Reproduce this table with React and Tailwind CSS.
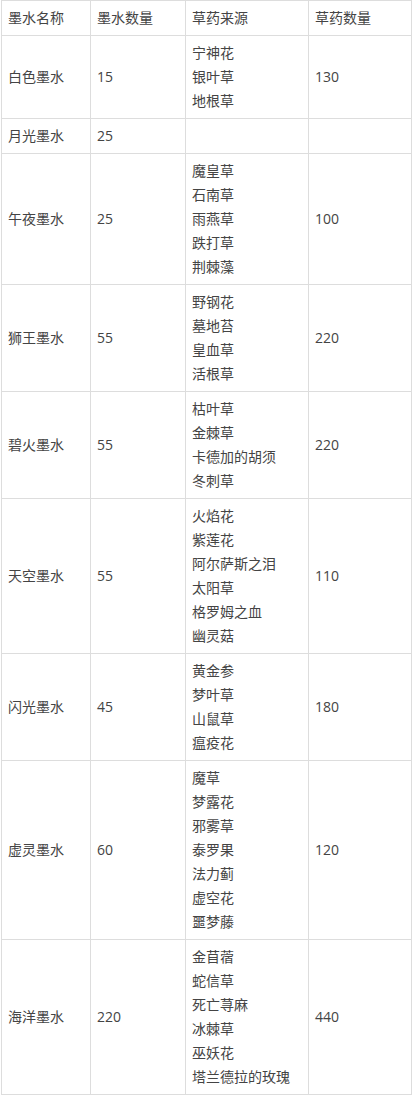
import React from "react";

const rows = [
  { name: "白色墨水", ink: "15", herbs: ["宁神花", "银叶草", "地根草"], qty: "130" },
  { name: "月光墨水", ink: "25", herbs: [], qty: "" },
  { name: "午夜墨水", ink: "25", herbs: ["魔皇草", "石南草", "雨燕草", "跌打草", "荆棘藻"], qty: "100" },
  { name: "狮王墨水", ink: "55", herbs: ["野钢花", "墓地苔", "皇血草", "活根草"], qty: "220" },
  { name: "碧火墨水", ink: "55", herbs: ["枯叶草", "金棘草", "卡德加的胡须", "冬刺草"], qty: "220" },
  { name: "天空墨水", ink: "55", herbs: ["火焰花", "紫莲花", "阿尔萨斯之泪", "太阳草", "格罗姆之血", "幽灵菇"], qty: "110" },
  { name: "闪光墨水", ink: "45", herbs: ["黄金参", "梦叶草", "山鼠草", "瘟疫花"], qty: "180" },
  { name: "虚灵墨水", ink: "60", herbs: ["魔草", "梦露花", "邪雾草", "泰罗果", "法力蓟", "虚空花", "噩梦藤"], qty: "120" },
  { name: "海洋墨水", ink: "220", herbs: ["金苜蓿", "蛇信草", "死亡荨麻", "冰棘草", "巫妖花", "塔兰德拉的玫瑰"], qty: "440" },
];

const cell = "border border-[#dddddd] px-[6px] py-[5px] align-middle text-left font-normal";

function App() {
  return (
    <div className="w-[413px] bg-white pl-px text-[14px] leading-[24px] text-[#444444] [font-family:'Open_Sans','Noto_Sans_CJK_SC',sans-serif]">
      <table className="w-[410px] table-fixed border-collapse">
        <colgroup>
          <col className="w-[89px]" />
          <col className="w-[95px]" />
          <col className="w-[123px]" />
          <col className="w-[103px]" />
        </colgroup>
        <thead>
          <tr>
            <th className={cell}>墨水名称</th>
            <th className={cell}>墨水数量</th>
            <th className={cell}>草药来源</th>
            <th className={cell}>草药数量</th>
          </tr>
        </thead>
        <tbody>
          {rows.map((r) => (
            <tr key={r.name}>
              <td className={cell}>{r.name}</td>
              <td className={cell}>{r.ink}</td>
              <td className={cell}>
                {r.herbs.map((h) => (
                  <div key={h}>{h}</div>
                ))}
              </td>
              <td className={cell}>{r.qty}</td>
            </tr>
          ))}
        </tbody>
      </table>
    </div>
  );
}

export default App;
